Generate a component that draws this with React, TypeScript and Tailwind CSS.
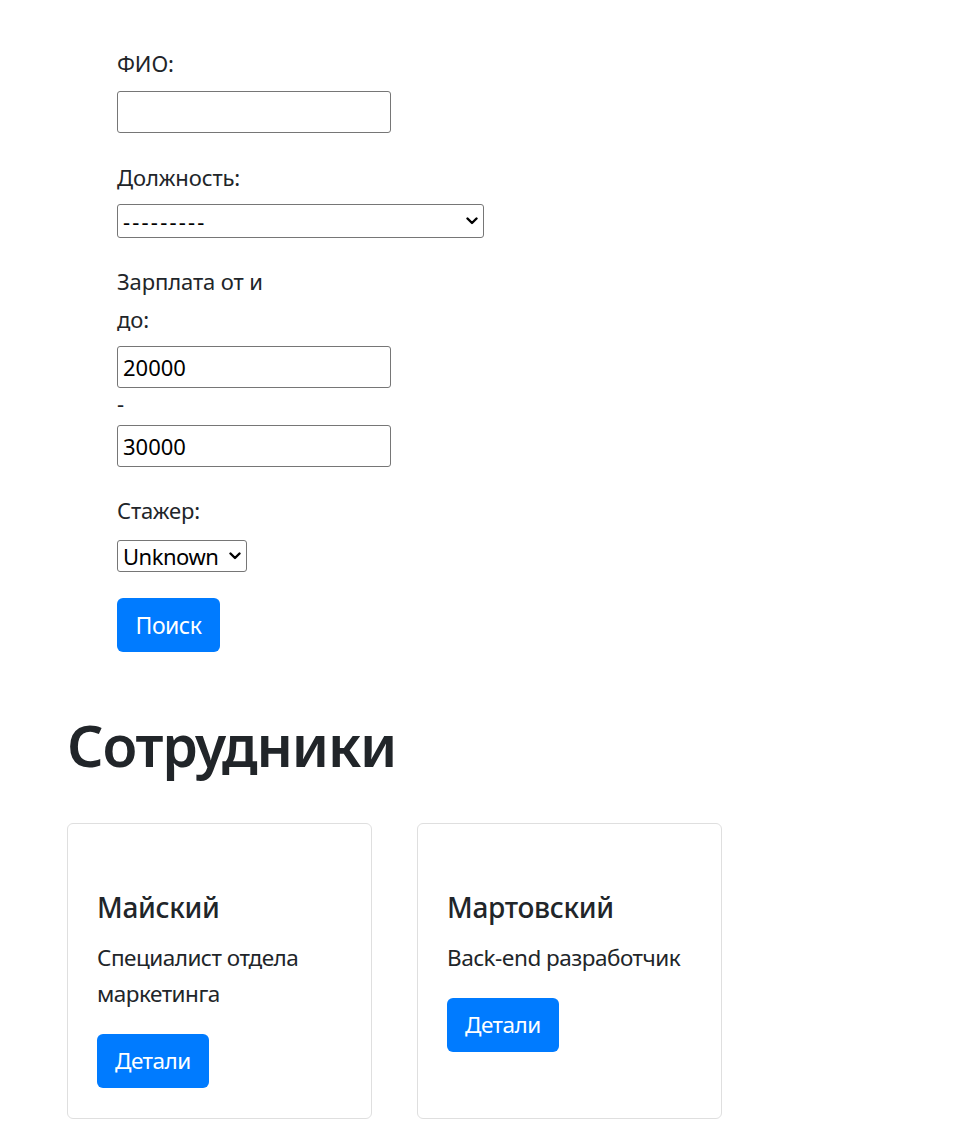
import React from "react";

const font = { fontFamily: '"Noto Sans", "Open Sans", sans-serif' };

function Chevron() {
  return (
    <svg width="12" height="8" viewBox="0 0 12 8" className="pointer-events-none absolute right-[6px] top-1/2 -translate-y-1/2">
      <path d="M1.5 1.5 L6 6 L10.5 1.5" fill="none" stroke="#000" strokeWidth="2.4" strokeLinecap="round" strokeLinejoin="round" />
    </svg>
  );
}

function Card({ name, role }: { name: string; role: string }) {
  return (
    <div className="w-[305px] rounded-[6px] border border-[#dfdfdf] bg-white px-[29px] pt-[65px] pb-[30px]">
      <h5 className="mb-[15px] text-[28px] font-medium leading-[36px] text-[#212529] tracking-[-0.3px]">{name}</h5>
      <p className="mb-[22px] text-[22.5px] leading-[36px] text-[#212529] tracking-[-0.5px]">{role}</p>
      <button className="h-[54px] rounded-[6px] bg-[#007bff] px-[18px] text-[22.5px] leading-[36px] text-white tracking-[-0.5px]">Детали</button>
    </div>
  );
}

export default function App() {
  return (
    <div className="min-h-[1141px] w-[974px] bg-white text-[#212529]" style={font}>
      <div className="flex flex-col pl-[117px]">
        <label className="mt-[45px] text-[22px] leading-[36px] tracking-[-0.1px]">ФИО:</label>
        <input className="mt-[10px] h-[42px] w-[274px] rounded-[3px] border border-[#767676] px-[5px] text-[22px] outline-none" />
        <label className="mt-[26px] text-[22px] leading-[36px] tracking-[-0.1px]">Должность:</label>
        <div className="relative mt-[9px] h-[34px] w-[367px]">
          <select className="h-full w-full appearance-none rounded-[3px] border border-[#767676] bg-white pl-[5px] text-[22px] leading-[30px] text-black outline-none tracking-[2.2px]">
            <option>---------</option>
          </select>
          <Chevron />
        </div>
        <label className="mt-[24px] w-[160px] text-[22px] leading-[38px] tracking-[-0.1px]">Зарплата от и до:</label>
        <input defaultValue="20000" className="mt-[8px] h-[42px] w-[274px] rounded-[3px] border border-[#767676] px-[5px] text-[22px] text-black outline-none" />
        <span className="h-[37px] text-[22px] leading-[30px]">-</span>
        <input defaultValue="30000" className="h-[42px] w-[274px] rounded-[3px] border border-[#767676] px-[5px] text-[22px] text-black outline-none" />
        <label className="mt-[25px] text-[22px] leading-[36px] tracking-[-0.1px]">Стажер:</label>
        <div className="relative mt-[12px] h-[32px] w-[130px]">
          <select className="h-full w-full appearance-none rounded-[3px] border border-[#767676] bg-white pl-[5px] text-[22px] leading-[28px] text-black outline-none tracking-[-0.5px]">
            <option>Unknown</option>
          </select>
          <Chevron />
        </div>
        <div>
          <button className="mt-[26px] h-[54px] w-[103px] rounded-[6px] bg-[#007bff] text-[23px] leading-[36px] text-white tracking-[-0.5px]">Поиск</button>
        </div>
      </div>
      <div className="pl-[67px]">
        <h1 className="mt-[57px] h-[72px] text-[57px] font-semibold leading-[72px] tracking-[-1.2px]">Сотрудники</h1>
        <div className="mt-[42px] flex items-stretch gap-[45px]">
          <Card name="Майский" role="Специалист отдела маркетинга" />
          <Card name="Мартовский" role="Back-end разработчик" />
        </div>
      </div>
    </div>
  );
}
